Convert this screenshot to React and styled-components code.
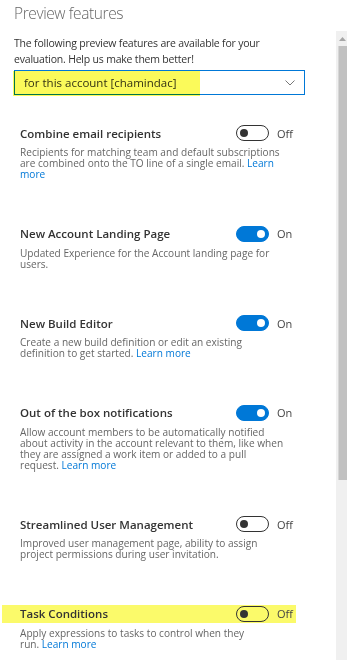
import React from "react";
import styled, { createGlobalStyle } from "styled-components";

const GlobalStyle = createGlobalStyle`
  html, body {
    margin: 0;
    padding: 0;
    background: #fff;
  }
  body {
    font-family: "Open Sans", "Noto Sans", sans-serif;
    color: #333;
  }
`;

const features = [
  {
    title: "Combine email recipients",
    on: false,
    text: "Recipients for matching team and default subscriptions are combined onto the TO line of a single email.",
    link: "Learn more",
  },
  {
    title: "New Account Landing Page",
    on: true,
    text: "Updated Experience for the Account landing page for users.",
  },
  {
    title: "New Build Editor",
    on: true,
    text: "Create a new build definition or edit an existing definition to get started.",
    link: "Learn more",
  },
  {
    title: "Out of the box notifications",
    on: true,
    text: "Allow account members to be automatically notified about activity in the account relevant to them, like when they are assigned a work item or added to a pull request.",
    link: "Learn more",
  },
  {
    title: "Streamlined User Management",
    on: false,
    text: "Improved user management page, ability to assign project permissions during user invitation.",
  },
  {
    title: "Task Conditions",
    on: false,
    marked: true,
    text: "Apply expressions to tasks to control when they",
    tail: "run.",
    link: "Learn more",
  },
];

const Toggle = ({ on }) => (
  <Switch on={on}>
    <Knob on={on} />
  </Switch>
);

const Feature = ({ item }) => (
  <FeatureBlock>
    <TitleRow marked={item.marked}>
      <FeatureTitle>{item.title}</FeatureTitle>
      <Toggle on={item.on} />
      <StateLabel>{item.on ? "On" : "Off"}</StateLabel>
    </TitleRow>
    <Description>
      {item.text}
      {item.tail && (
        <>
          <br />
          {item.tail}
        </>
      )}
      {item.link && (
        <>
          {" "}
          <LearnMore href="#">{item.link}</LearnMore>
        </>
      )}
    </Description>
  </FeatureBlock>
);

const App = () => {
  return (
    <>
      <GlobalStyle />
      <Page>
        <Heading>Preview features</Heading>
        <Body>
          <Content>
            <Intro>
              The following preview features are available for your evaluation. Help us make them
              better!
            </Intro>
            <Select>
              <SelectText>for this account [chamindac]</SelectText>
              <svg width="10" height="6" viewBox="0 0 10 6">
                <path d="M0.5 0.5 L5 5 L9.5 0.5" fill="none" stroke="#777" strokeWidth="1" />
              </svg>
              <Marker />
            </Select>
            <FeatureList>
              {features.map(f => (
                <Feature key={f.title} item={f} />
              ))}
            </FeatureList>
          </Content>
          <Scrollbar>
            <ArrowButton>
              <svg width="7" height="4" viewBox="0 0 7 4">
                <path d="M0 4 L3.5 0 L7 4 Z" fill="#a6a6a6" />
              </svg>
            </ArrowButton>
            <Thumb />
          </Scrollbar>
        </Body>
      </Page>
    </>
  );
};

const Page = styled.div`
  width: 347px;
  height: 660px;
  overflow: hidden;
  display: flex;
  flex-direction: column;
`;

const Heading = styled.h1`
  margin: 0;
  padding: 2px 0 0 14px;
  height: 31px;
  box-sizing: border-box;
  font-size: 15.5px;
  letter-spacing: -0.4px;
  font-weight: 300;
  color: #666;
  line-height: 22px;
`;

const Body = styled.div`
  flex: 1;
  display: flex;
  min-height: 0;
`;

const Content = styled.div`
  flex: 1;
  padding: 4px 0 0 14px;
`;

const Intro = styled.p`
  margin: 0;
  width: 291px;
  font-size: 10.5px;
  letter-spacing: -0.2px;
  line-height: 16px;
  color: #333;
`;

const Select = styled.div`
  position: relative;
  margin-top: 3px;
  width: 291px;
  height: 25px;
  box-sizing: border-box;
  border: 1px solid #0078d7;
  display: flex;
  align-items: center;
  justify-content: space-between;
  padding: 0 9px 0 9px;
`;

const SelectText = styled.span`
  font-size: 11.5px;
  color: #333;
`;

const Marker = styled.span`
  position: absolute;
  left: -2px;
  top: 0;
  width: 187px;
  height: 25px;
  background: #fbfa5a;
  mix-blend-mode: multiply;
  pointer-events: none;
`;

const FeatureList = styled.div`
  padding: 29px 0 0 6px;
  display: flex;
  flex-direction: column;
  gap: 44.5px;
`;

const FeatureBlock = styled.div`
  display: flex;
  flex-direction: column;
  gap: 5px;
`;

const TitleRow = styled.div`
  box-sizing: border-box;
  display: grid;
  grid-template-columns: 208px 33px auto;
  column-gap: 8px;
  align-items: center;
  height: 18px;
  margin-left: ${p => (p.marked ? "-18px" : "0")};
  padding-left: ${p => (p.marked ? "18px" : "0")};
  width: ${p => (p.marked ? "294px" : "auto")};
  background: ${p => (p.marked ? "#fbfa6a" : "transparent")};
`;

const FeatureTitle = styled.span`
  font-size: 11.5px;
  font-weight: 600;
  color: #333;
`;

const Switch = styled.span`
  box-sizing: border-box;
  width: 33px;
  height: 16px;
  border-radius: 8px;
  border: 1px solid ${p => (p.on ? "#0078d7" : "#333")};
  background: ${p => (p.on ? "#0078d7" : "transparent")};
  display: flex;
  align-items: center;
  justify-content: ${p => (p.on ? "flex-end" : "flex-start")};
  padding: 0 3px;
`;

const Knob = styled.span`
  width: 8px;
  height: 8px;
  border-radius: 50%;
  background: ${p => (p.on ? "#fff" : "#333")};
`;

const StateLabel = styled.span`
  font-size: 11px;
  color: #444;
`;

const Description = styled.p`
  margin: 0;
  width: 267px;
  font-size: 10.1px;
  line-height: 11px;
  color: #666;
`;

const LearnMore = styled.a`
  color: #0078d7;
  text-decoration: none;
`;

const Scrollbar = styled.div`
  width: 11px;
  background: #f0f0f0;
  display: flex;
  flex-direction: column;
`;

const ArrowButton = styled.div`
  height: 15px;
  display: flex;
  align-items: center;
  justify-content: center;
  padding-left: 2px;
`;

const Thumb = styled.div`
  margin-left: 2px;
  height: 434px;
  background: #c1c1c1;
  border-left: 1px solid #d6d6d6;
`;

export default App;
